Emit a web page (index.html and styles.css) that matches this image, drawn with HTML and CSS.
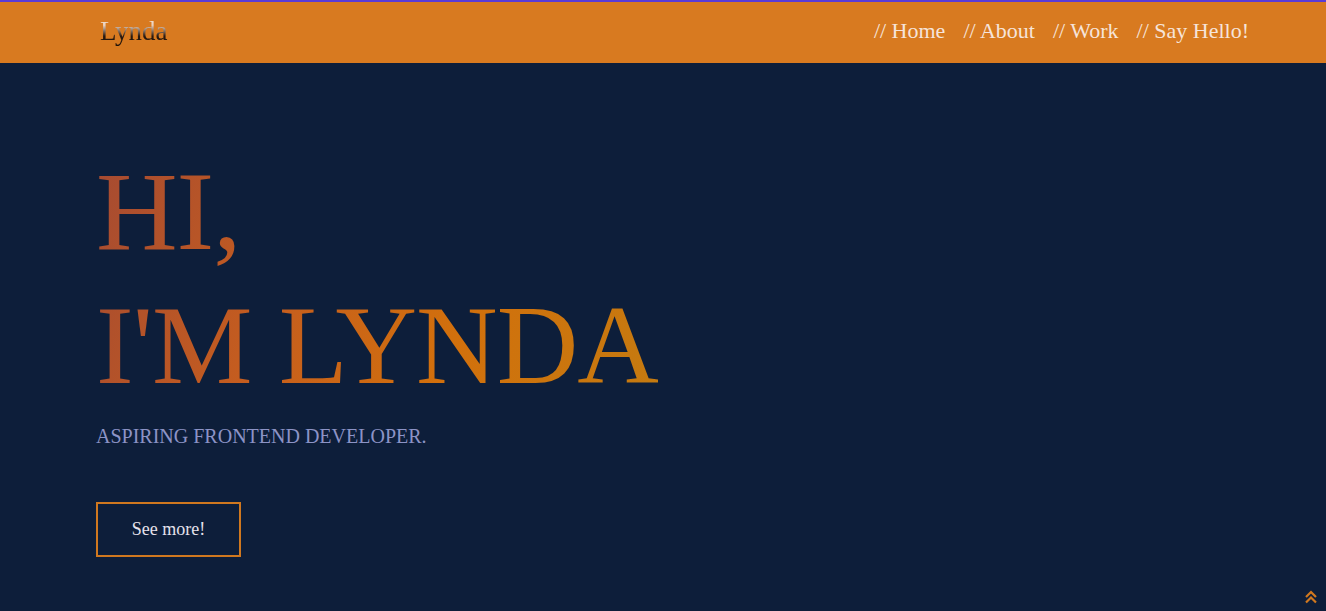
FILE: index.html
```html
<!DOCTYPE html>
<html lang="en">
<head>
<meta charset="utf-8">
<title>Lynda</title>
<link rel="stylesheet" href="styles.css">
</head>
<body>
<header class="topbar">
  <div class="topbar-inner">
    <a class="logo" href="#">Lynda</a>
    <nav class="nav">
      <a href="#">// Home</a>
      <a href="#">// About</a>
      <a href="#">// Work</a>
      <a href="#">// Say Hello!</a>
    </nav>
  </div>
</header>
<main class="hero">
  <h1 class="hero-title">HI,<br>I'M LYNDA</h1>
  <p class="hero-sub">ASPIRING FRONTEND DEVELOPER.</p>
  <a class="btn" href="#">See more!</a>
</main>
<a class="to-top" href="#" aria-label="Back to top">
  <svg width="14" height="14" viewBox="0 0 14 14"><path d="M2 7 L7 2 L12 7 M2 12.5 L7 7.5 L12 12.5" fill="none" stroke="#d0781f" stroke-width="2.2"/></svg>
</a>
</body>
</html>
```

FILE: styles.css
```css
html, body {
  margin: 0;
  padding: 0;
  height: 100%;
  overflow: hidden;
}
body {
  background: #0d1e3a;
  font-family: "Liberation Serif", "DejaVu Serif", serif;
  border-top: 2px solid #5a3bd6;
  box-sizing: border-box;
}
a { text-decoration: none; }
.topbar {
  background: #d87a20;
  height: 61px;
}
.topbar-inner {
  height: 100%;
  display: flex;
  align-items: center;
  justify-content: space-between;
  padding: 0 77px 0 100px;
}
.logo {
  font-size: 27px;
  background: linear-gradient(to bottom, #f6e6d6 0%, #e9d1c0 30%, #2a1a10 65%, #1a0f08 100%);
  -webkit-background-clip: text;
  background-clip: text;
  color: transparent;
  margin-top: -3px;
}
.nav {
  display: flex;
  gap: 18px;
  margin-top: -3px;
}
.nav a {
  color: #f6e4da;
  font-size: 22px;
}
.hero {
  padding: 81px 0 0 96px;
}
.hero-title {
  margin: 0;
  font-weight: normal;
  font-size: 113px;
  letter-spacing: -1px;
  line-height: 134px;
  display: inline-block;
  background: linear-gradient(110deg, #a54a32 0%, #c55d1f 35%, #d2700c 65%, #c47b10 100%);
  -webkit-background-clip: text;
  background-clip: text;
  color: transparent;
}
.hero-sub {
  margin: 13px 0 0 0;
  color: #8c93c6;
  font-size: 20px;
}
.btn {
  display: inline-flex;
  align-items: center;
  justify-content: center;
  margin-top: 54px;
  width: 141px;
  height: 51px;
  border: 2px solid #d0781f;
  color: #e6e2ec;
  font-size: 18px;
}
.to-top {
  position: fixed;
  right: 8px;
  bottom: 7px;
  display: block;
  line-height: 0;
}
```
